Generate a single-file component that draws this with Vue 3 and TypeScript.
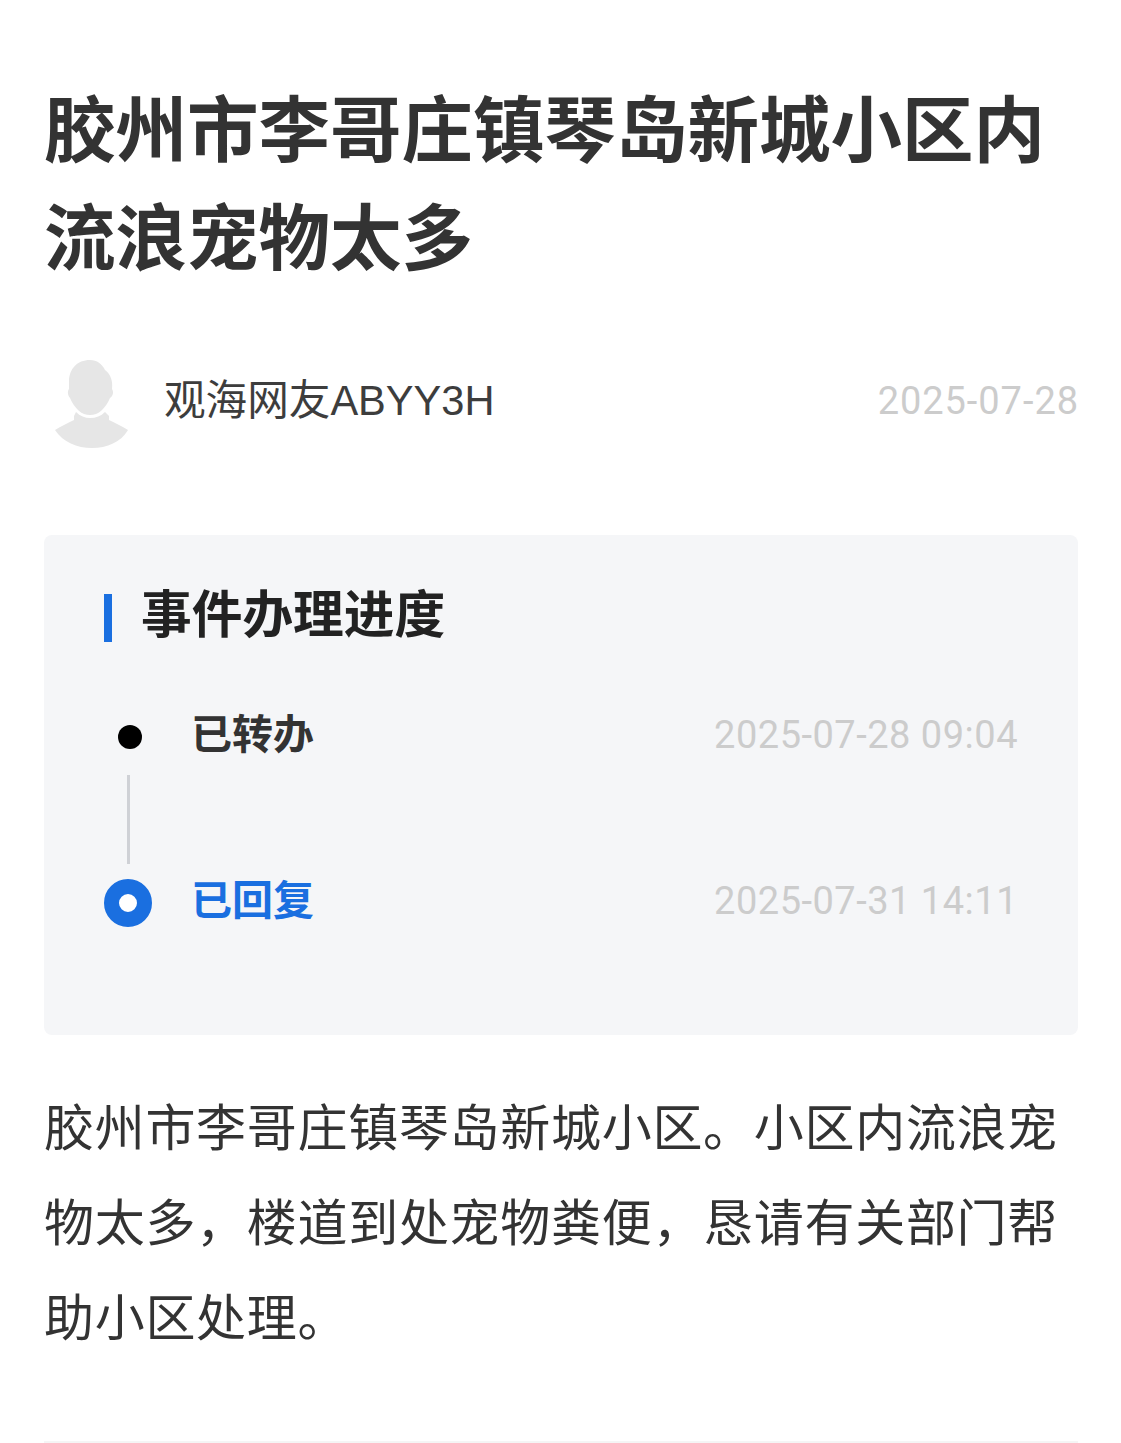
<script setup lang="ts">
interface Step {
  label: string
  time: string
  current: boolean
}

const steps: Step[] = [
  { label: '已转办', time: '2025-07-28 09:04', current: false },
  { label: '已回复', time: '2025-07-31 14:11', current: true }
]
</script>

<template>
  <div class="page">
    <h1 class="title">胶州市李哥庄镇琴岛新城小区内流浪宠物太多</h1>

    <div class="author">
      <svg class="avatar" viewBox="0 0 74 88" width="74" height="88">
        <path
          d="M35 0C22 0 14 9 14 22v7c-2 2-1 7 1 9 2 5 5 9 8 12 4 4 8 5 12 5s8-1 12-5c3-3 6-7 8-12 3-2 4-6 2-9 1-7-1-15-7-19C47 4 42 0 35 0z"
          fill="#e6e6e6"
        />
        <path
          d="M21 52c4 4 9 6 14 6 6 0 11-2 15-6l4 4v4c6 3 13 6 19 10-7 12-21 18-36 18C22 88 8 82 0 70c6-4 13-7 19-10v-4z"
          fill="#e6e6e6"
        />
      </svg>
      <span class="name">观海网友ABYY3H</span>
      <span class="date">2025-07-28</span>
    </div>

    <section class="progress">
      <h2 class="progress-title">事件办理进度</h2>
      <ul class="steps">
        <li v-for="step in steps" :key="step.label" :class="['step', { current: step.current }]">
          <span class="marker"><i class="dot"></i></span>
          <span class="label">{{ step.label }}</span>
          <span class="time">{{ step.time }}</span>
        </li>
      </ul>
    </section>

    <p class="content">胶州市李哥庄镇琴岛新城小区。小区内流浪宠物太多，楼道到处宠物粪便，恳请有关部门帮助小区处理。</p>

    <div class="divider"></div>
  </div>
</template>

<style>
html,
body {
  background: #fff;
}
</style>

<style scoped>
.page {
  box-sizing: border-box;
  height: 1443px;
  padding: 77px 43px 0 44px;
  overflow: hidden;
  font-family: 'Liberation Sans', 'Noto Sans CJK SC', sans-serif;
  color: #333;
}

.title {
  margin: 0;
  font-size: 71.5px;
  line-height: 108px;
  font-weight: 700;
  color: #333;
}

.author {
  display: flex;
  align-items: center;
  margin-top: 67px;
  height: 88px;
}

.avatar {
  margin-left: 11px;
  flex: none;
}

.name {
  margin-left: 35px;
  margin-bottom: 14px;
  font-size: 41.6px;
  color: #3d3d3d;
}

.date {
  margin-left: auto;
  margin-right: -1px;
  margin-bottom: 6px;
  font-family: Roboto, sans-serif;
  font-size: 38px;
  letter-spacing: 0.95px;
  color: #ccc;
}

.progress {
  box-sizing: border-box;
  height: 500px;
  margin-top: 87px;
  padding: 59px 60px 0;
  background: #f5f6f8;
  border-radius: 8px;
}

.progress-title {
  margin: 0;
  padding-left: 29px;
  border-left: 8px solid #1a6fe0;
  height: 48px;
  font-size: 50.7px;
  line-height: 44px;
  font-weight: 700;
  color: #222;
}

.steps {
  margin: 0;
  padding: 0;
  list-style: none;
}

.step {
  display: flex;
  align-items: center;
  height: 48px;
  margin-top: 71px;
  position: relative;
}

.step + .step {
  margin-top: 118px;
}

.step + .step::before {
  content: '';
  position: absolute;
  left: 23px;
  top: -104px;
  width: 3px;
  height: 89px;
  background: #cfd1d6;
}

.marker {
  flex: none;
  display: flex;
  align-items: center;
  justify-content: center;
  width: 48px;
  height: 48px;
  margin-right: 39px;
}

.dot {
  display: block;
  width: 24px;
  height: 24px;
  margin-left: 3px;
  border-radius: 50%;
  background: #000;
}

.current .dot {
  box-sizing: border-box;
  width: 48px;
  height: 48px;
  margin-left: 0;
  border: 15px solid #1a6fe0;
  background: #fff;
}

.label {
  margin-bottom: 12px;
  font-size: 41px;
  font-weight: 700;
  color: #333;
}

.current .label {
  color: #1a6fe0;
}

.time {
  margin-left: auto;
  margin-bottom: 4px;
  font-family: Roboto, sans-serif;
  font-size: 38px;
  letter-spacing: 0.5px;
  color: #ccc;
}

.content {
  margin: 47px 0 0;
  font-size: 50px;
  line-height: 95px;
  letter-spacing: 0.7px;
  color: #333;
}

.divider {
  height: 2px;
  margin-top: 74px;
  background: #f5f5f5;
}
</style>
